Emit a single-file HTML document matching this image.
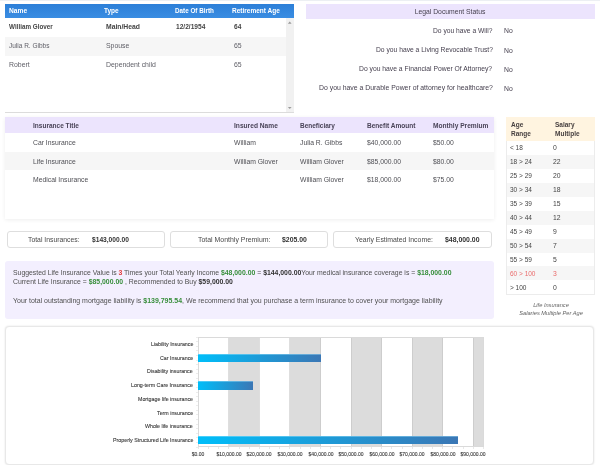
<!DOCTYPE html>
<html><head><meta charset="utf-8">
<style>
*{margin:0;padding:0;box-sizing:border-box}
html,body{width:600px;height:465px;overflow:hidden;background:#fff;font-family:"Liberation Sans",sans-serif;color:#555}
.t{position:absolute;white-space:nowrap;will-change:transform}
.r0{position:absolute}
</style></head><body>
<div class="r0" style="left:0.00px;top:0.00px;width:600.00px;height:1.20px;background:#ecEFF3;"></div>
<div class="r0" style="left:5.00px;top:4.20px;width:289.00px;height:108.30px;background:#fff;"></div>
<div class="r0" style="left:5.00px;top:4.20px;width:289.00px;height:13.60px;background:linear-gradient(#2c7fd8,#3a8de2);"></div>
<div class="r0" style="left:5.00px;top:36.70px;width:281.50px;height:18.90px;background:#f6f6f6;"></div>
<div class="r0" style="left:286.00px;top:17.80px;width:8.00px;height:94.50px;background:#f1f1f1;"></div>
<div class="r0" style="left:5.00px;top:112.00px;width:289.00px;height:1.00px;background:#dcdcdc;"></div>
<svg class="r0" style="left:286px;top:20px" width="8" height="8"><path d="M1.9 3.8 L3.75 1.6 L5.6 3.8Z" fill="#9a9a9a"/></svg>
<svg class="r0" style="left:286px;top:104px" width="8" height="8"><path d="M1.9 3 L3.75 5 L5.6 3Z" fill="#9a9a9a"/></svg>
<div class="t" style="left:9.00px;top:8.00px;font-size:6.7px;line-height:6.7px;color:#fff;font-weight:700;">Name</div>
<div class="t" style="left:104.20px;top:8.00px;font-size:6.5px;line-height:6.5px;color:#fff;font-weight:700;">Type</div>
<div class="t" style="left:175.00px;top:8.00px;font-size:6.3px;line-height:6.3px;color:#fff;font-weight:700;">Date Of Birth</div>
<div class="t" style="left:232.00px;top:8.00px;font-size:6.5px;line-height:6.5px;color:#fff;font-weight:700;">Retirement Age</div>
<div class="t" style="left:9.20px;top:24.00px;font-size:6.3px;line-height:6.3px;color:#444;font-weight:700;">William Glover</div>
<div class="t" style="left:105.80px;top:24.00px;font-size:6.8px;line-height:6.8px;color:#444;font-weight:700;">Main/Head</div>
<div class="t" style="left:176.40px;top:24.00px;font-size:6.6px;line-height:6.6px;color:#444;font-weight:700;">12/2/1954</div>
<div class="t" style="left:234.00px;top:24.00px;font-size:6.6px;line-height:6.6px;color:#444;font-weight:700;">64</div>
<div class="t" style="left:9.30px;top:43.00px;font-size:6.5px;line-height:6.5px;color:#5e5e66;">Julia R. Gibbs</div>
<div class="t" style="left:105.90px;top:43.00px;font-size:6.9px;line-height:6.9px;color:#5e5e66;">Spouse</div>
<div class="t" style="left:234.00px;top:43.00px;font-size:6.9px;line-height:6.9px;color:#5e5e66;">65</div>
<div class="t" style="left:9.30px;top:62.00px;font-size:6.9px;line-height:6.9px;color:#5e5e66;">Robert</div>
<div class="t" style="left:105.90px;top:62.00px;font-size:6.9px;line-height:6.9px;color:#5e5e66;">Dependent child</div>
<div class="t" style="left:234.00px;top:62.00px;font-size:6.9px;line-height:6.9px;color:#5e5e66;">65</div>
<div class="r0" style="left:306.00px;top:4.00px;width:289.00px;height:15.00px;background:#ece4fd;"></div>
<div class="t" style="left:400.20px;width:100px;text-align:center;top:9.00px;font-size:6.8px;line-height:6.8px;color:#46404f;">Legal Document Status</div>
<div class="t" style="right:107.50px;top:28.00px;font-size:6.69px;line-height:6.69px;color:#46404f;text-align:right;">Do you have a Will?</div>
<div class="t" style="left:504.20px;top:28.00px;font-size:6.8px;line-height:6.8px;color:#46404f;">No</div>
<div class="t" style="right:107.50px;top:47.00px;font-size:6.72px;line-height:6.72px;color:#46404f;text-align:right;">Do you have a Living Revocable Trust?</div>
<div class="t" style="left:504.20px;top:48.00px;font-size:6.8px;line-height:6.8px;color:#46404f;">No</div>
<div class="t" style="right:107.50px;top:66.00px;font-size:6.77px;line-height:6.77px;color:#46404f;text-align:right;">Do you have a Financial Power Of Attorney?</div>
<div class="t" style="left:504.20px;top:67.00px;font-size:6.8px;line-height:6.8px;color:#46404f;">No</div>
<div class="t" style="right:107.50px;top:85.00px;font-size:6.89px;line-height:6.89px;color:#46404f;text-align:right;">Do you have a Durable Power of attorney for healthcare?</div>
<div class="t" style="left:504.20px;top:86.00px;font-size:6.8px;line-height:6.8px;color:#46404f;">No</div>
<div class="r0" style="left:5.00px;top:117.30px;width:489.00px;height:101.40px;background:#fff;box-shadow:0 1px 4px rgba(0,0,0,0.07);"></div>
<div class="r0" style="left:5.00px;top:117.30px;width:489.00px;height:15.70px;background:#ece4fd;"></div>
<div class="r0" style="left:5.00px;top:151.90px;width:489.00px;height:18.10px;background:#f6f6f6;"></div>
<div class="t" style="left:32.80px;top:123.00px;font-size:6.53px;line-height:6.53px;color:#4a4458;font-weight:700;">Insurance Title</div>
<div class="t" style="left:234.00px;top:123.00px;font-size:6.64px;line-height:6.64px;color:#4a4458;font-weight:700;">Insured Name</div>
<div class="t" style="left:299.80px;top:123.00px;font-size:6.49px;line-height:6.49px;color:#4a4458;font-weight:700;">Beneficiary</div>
<div class="t" style="left:366.50px;top:123.00px;font-size:6.55px;line-height:6.55px;color:#4a4458;font-weight:700;">Benefit Amount</div>
<div class="t" style="left:432.80px;top:123.00px;font-size:6.61px;line-height:6.61px;color:#4a4458;font-weight:700;">Monthly Premium</div>
<div class="t" style="left:32.80px;top:140.00px;font-size:6.8px;line-height:6.8px;color:#4f4f55;">Car Insurance</div>
<div class="t" style="left:234.00px;top:140.00px;font-size:6.8px;line-height:6.8px;color:#4f4f55;">William</div>
<div class="t" style="left:299.80px;top:140.00px;font-size:6.8px;line-height:6.8px;color:#4f4f55;">Julia R. Gibbs</div>
<div class="t" style="left:366.50px;top:140.00px;font-size:6.8px;line-height:6.8px;color:#4f4f55;">$40,000.00</div>
<div class="t" style="left:432.80px;top:140.00px;font-size:6.8px;line-height:6.8px;color:#4f4f55;">$50.00</div>
<div class="t" style="left:32.80px;top:159.00px;font-size:6.8px;line-height:6.8px;color:#4f4f55;">Life Insurance</div>
<div class="t" style="left:234.00px;top:159.00px;font-size:6.8px;line-height:6.8px;color:#4f4f55;">William Glover</div>
<div class="t" style="left:299.80px;top:159.00px;font-size:6.8px;line-height:6.8px;color:#4f4f55;">William Glover</div>
<div class="t" style="left:366.50px;top:159.00px;font-size:6.8px;line-height:6.8px;color:#4f4f55;">$85,000.00</div>
<div class="t" style="left:432.80px;top:159.00px;font-size:6.8px;line-height:6.8px;color:#4f4f55;">$80.00</div>
<div class="t" style="left:32.80px;top:177.00px;font-size:6.8px;line-height:6.8px;color:#4f4f55;">Medical Insurance</div>
<div class="t" style="left:299.80px;top:177.00px;font-size:6.8px;line-height:6.8px;color:#4f4f55;">William Glover</div>
<div class="t" style="left:366.50px;top:177.00px;font-size:6.8px;line-height:6.8px;color:#4f4f55;">$18,000.00</div>
<div class="t" style="left:432.80px;top:177.00px;font-size:6.8px;line-height:6.8px;color:#4f4f55;">$75.00</div>
<div class="r0" style="left:506.30px;top:117.30px;width:88.30px;height:177.60px;background:#fff;border:1px solid #ececec;border-top:none;"></div>
<div class="r0" style="left:506.30px;top:117.30px;width:88.30px;height:23.70px;background:#fff4e0;"></div>
<div class="r0" style="left:507.30px;top:154.94px;width:86.30px;height:13.94px;background:#f6f6f6;"></div>
<div class="r0" style="left:507.30px;top:182.82px;width:86.30px;height:13.94px;background:#f6f6f6;"></div>
<div class="r0" style="left:507.30px;top:210.70px;width:86.30px;height:13.94px;background:#f6f6f6;"></div>
<div class="r0" style="left:507.30px;top:238.58px;width:86.30px;height:13.94px;background:#f6f6f6;"></div>
<div class="r0" style="left:507.30px;top:266.46px;width:86.30px;height:13.94px;background:#f6f6f6;"></div>
<div class="t" style="left:511.40px;top:122.00px;font-size:6.5px;line-height:6.5px;color:#463f3f;font-weight:700;">Age</div>
<div class="t" style="left:511.40px;top:131.00px;font-size:6.5px;line-height:6.5px;color:#463f3f;font-weight:700;">Range</div>
<div class="t" style="left:555.20px;top:122.00px;font-size:6.5px;line-height:6.5px;color:#463f3f;font-weight:700;">Salary</div>
<div class="t" style="left:555.20px;top:131.00px;font-size:6.5px;line-height:6.5px;color:#463f3f;font-weight:700;">Multiple</div>
<div class="t" style="left:509.50px;top:145.00px;font-size:6.5px;line-height:6.5px;color:#444;">&lt; 18</div>
<div class="t" style="left:552.90px;top:145.00px;font-size:6.8px;line-height:6.8px;color:#444;">0</div>
<div class="t" style="left:509.50px;top:159.00px;font-size:6.5px;line-height:6.5px;color:#444;">18 &gt; 24</div>
<div class="t" style="left:552.90px;top:159.00px;font-size:6.8px;line-height:6.8px;color:#444;">22</div>
<div class="t" style="left:509.50px;top:173.00px;font-size:6.5px;line-height:6.5px;color:#444;">25 &gt; 29</div>
<div class="t" style="left:552.90px;top:173.00px;font-size:6.8px;line-height:6.8px;color:#444;">20</div>
<div class="t" style="left:509.50px;top:187.00px;font-size:6.5px;line-height:6.5px;color:#444;">30 &gt; 34</div>
<div class="t" style="left:552.90px;top:187.00px;font-size:6.8px;line-height:6.8px;color:#444;">18</div>
<div class="t" style="left:509.50px;top:201.00px;font-size:6.5px;line-height:6.5px;color:#444;">35 &gt; 39</div>
<div class="t" style="left:552.90px;top:201.00px;font-size:6.8px;line-height:6.8px;color:#444;">15</div>
<div class="t" style="left:509.50px;top:215.00px;font-size:6.5px;line-height:6.5px;color:#444;">40 &gt; 44</div>
<div class="t" style="left:552.90px;top:215.00px;font-size:6.8px;line-height:6.8px;color:#444;">12</div>
<div class="t" style="left:509.50px;top:229.00px;font-size:6.5px;line-height:6.5px;color:#444;">45 &gt; 49</div>
<div class="t" style="left:552.90px;top:229.00px;font-size:6.8px;line-height:6.8px;color:#444;">9</div>
<div class="t" style="left:509.50px;top:243.00px;font-size:6.5px;line-height:6.5px;color:#444;">50 &gt; 54</div>
<div class="t" style="left:552.90px;top:243.00px;font-size:6.8px;line-height:6.8px;color:#444;">7</div>
<div class="t" style="left:509.50px;top:257.00px;font-size:6.5px;line-height:6.5px;color:#444;">55 &gt; 59</div>
<div class="t" style="left:552.90px;top:257.00px;font-size:6.8px;line-height:6.8px;color:#444;">5</div>
<div class="t" style="left:509.50px;top:271.00px;font-size:6.5px;line-height:6.5px;color:#ea6c6c;">60 &gt; 100</div>
<div class="t" style="left:552.90px;top:271.00px;font-size:6.8px;line-height:6.8px;color:#ea6c6c;">3</div>
<div class="t" style="left:509.50px;top:285.00px;font-size:6.5px;line-height:6.5px;color:#444;">&gt; 100</div>
<div class="t" style="left:552.90px;top:285.00px;font-size:6.8px;line-height:6.8px;color:#444;">0</div>
<div class="t" style="left:500.75px;width:100px;text-align:center;top:303.00px;font-size:5.7px;line-height:5.7px;color:#626262;font-style:italic;">Life Insurance</div>
<div class="t" style="left:500.75px;width:100px;text-align:center;top:311.00px;font-size:5.7px;line-height:5.7px;color:#626262;font-style:italic;">Salaries Multiple Per Age</div>
<div class="r0" style="left:7.00px;top:231.00px;width:158.00px;height:17.00px;background:#fff;border:1px solid #dedede;border-radius:3px;"></div>
<div class="t" style="left:28.40px;top:237.00px;font-size:6.83px;line-height:6.83px;color:#4a4a4a;">Total Insurances:</div>
<div class="t" style="left:92.00px;top:237.00px;font-size:6.65px;line-height:6.65px;color:#333;font-weight:700;">$143,000.00</div>
<div class="r0" style="left:170.00px;top:231.00px;width:158.00px;height:17.00px;background:#fff;border:1px solid #dedede;border-radius:3px;"></div>
<div class="t" style="left:197.50px;top:237.00px;font-size:6.94px;line-height:6.94px;color:#4a4a4a;">Total Monthly Premium:</div>
<div class="t" style="left:282.20px;top:237.00px;font-size:6.89px;line-height:6.89px;color:#333;font-weight:700;">$205.00</div>
<div class="r0" style="left:333.00px;top:231.00px;width:159.00px;height:17.00px;background:#fff;border:1px solid #dedede;border-radius:3px;"></div>
<div class="t" style="left:355.40px;top:237.00px;font-size:6.9px;line-height:6.9px;color:#4a4a4a;">Yearly Estimated Income:</div>
<div class="t" style="left:445.00px;top:237.00px;font-size:6.9px;line-height:6.9px;color:#333;font-weight:700;">$48,000.00</div>
<div class="r0" style="left:5.00px;top:260.50px;width:489.00px;height:58.00px;background:#f3effe;border-radius:3px;"></div>
<div class="t" style="left:12.50px;top:270.00px;font-size:6.86px;line-height:6.86px;color:#4f4f4f;">Suggested Life Insurance Value is <span style="color:#e23a3a;font-weight:700">3</span> Times your Total Yearly Income <span style="color:#388e3c;font-weight:700">$48,000.00</span> = <b style="color:#333">$144,000.00</b>Your medical insurance coverage is = <span style="color:#388e3c;font-weight:700">$18,000.00</span></div>
<div class="t" style="left:12.50px;top:279.00px;font-size:6.86px;line-height:6.86px;color:#4f4f4f;">Current Life Insurance = <span style="color:#388e3c;font-weight:700">$85,000.00</span> , Recommended to Buy <b style="color:#333">$59,000.00</b></div>
<div class="t" style="left:12.50px;top:297.00px;font-size:6.98px;line-height:6.98px;color:#4f4f4f;">Your total outstanding mortgage liability is <span style="color:#388e3c;font-weight:700">$139,795.54</span>, We recommend that you purchase a term insurance to cover your mortgage liability</div>
<div class="r0" style="left:5.00px;top:326.20px;width:588.80px;height:138.60px;background:#fff;border:1px solid #e8e8e8;border-radius:4px;box-shadow:0 0 2px rgba(0,0,0,0.12);"></div>
<div class="r0" style="left:228.86px;top:337.20px;width:30.56px;height:109.80px;background:#dcdcdc;"></div>
<div class="r0" style="left:289.98px;top:337.20px;width:30.56px;height:109.80px;background:#dcdcdc;"></div>
<div class="r0" style="left:351.10px;top:337.20px;width:30.56px;height:109.80px;background:#dcdcdc;"></div>
<div class="r0" style="left:412.22px;top:337.20px;width:30.56px;height:109.80px;background:#dcdcdc;"></div>
<div class="r0" style="left:473.34px;top:337.20px;width:10.86px;height:109.80px;background:#dcdcdc;"></div>
<div class="r0" style="left:228.36px;top:337.20px;width:1.00px;height:109.80px;background:rgba(190,190,190,0.5);"></div>
<div class="r0" style="left:258.92px;top:337.20px;width:1.00px;height:109.80px;background:rgba(190,190,190,0.5);"></div>
<div class="r0" style="left:289.48px;top:337.20px;width:1.00px;height:109.80px;background:rgba(190,190,190,0.5);"></div>
<div class="r0" style="left:320.04px;top:337.20px;width:1.00px;height:109.80px;background:rgba(190,190,190,0.5);"></div>
<div class="r0" style="left:350.60px;top:337.20px;width:1.00px;height:109.80px;background:rgba(190,190,190,0.5);"></div>
<div class="r0" style="left:381.16px;top:337.20px;width:1.00px;height:109.80px;background:rgba(190,190,190,0.5);"></div>
<div class="r0" style="left:411.72px;top:337.20px;width:1.00px;height:109.80px;background:rgba(190,190,190,0.5);"></div>
<div class="r0" style="left:442.28px;top:337.20px;width:1.00px;height:109.80px;background:rgba(190,190,190,0.5);"></div>
<div class="r0" style="left:472.84px;top:337.20px;width:1.00px;height:109.80px;background:rgba(190,190,190,0.5);"></div>
<div class="r0" style="left:197.80px;top:336.70px;width:286.40px;height:110.30px;background:transparent;border:1px solid #dadada;"></div>
<div class="r0" style="left:195.80px;top:336.70px;width:2.00px;height:1.00px;background:#ececec;"></div>
<div class="r0" style="left:195.80px;top:341.27px;width:2.00px;height:1.00px;background:#ececec;"></div>
<div class="r0" style="left:195.80px;top:345.85px;width:2.00px;height:1.00px;background:#ececec;"></div>
<div class="r0" style="left:195.80px;top:350.43px;width:2.00px;height:1.00px;background:#ececec;"></div>
<div class="r0" style="left:195.80px;top:355.00px;width:2.00px;height:1.00px;background:#ececec;"></div>
<div class="r0" style="left:195.80px;top:359.57px;width:2.00px;height:1.00px;background:#ececec;"></div>
<div class="r0" style="left:195.80px;top:364.15px;width:2.00px;height:1.00px;background:#ececec;"></div>
<div class="r0" style="left:195.80px;top:368.73px;width:2.00px;height:1.00px;background:#ececec;"></div>
<div class="r0" style="left:195.80px;top:373.30px;width:2.00px;height:1.00px;background:#ececec;"></div>
<div class="r0" style="left:195.80px;top:377.88px;width:2.00px;height:1.00px;background:#ececec;"></div>
<div class="r0" style="left:195.80px;top:382.45px;width:2.00px;height:1.00px;background:#ececec;"></div>
<div class="r0" style="left:195.80px;top:387.02px;width:2.00px;height:1.00px;background:#ececec;"></div>
<div class="r0" style="left:195.80px;top:391.60px;width:2.00px;height:1.00px;background:#ececec;"></div>
<div class="r0" style="left:195.80px;top:396.18px;width:2.00px;height:1.00px;background:#ececec;"></div>
<div class="r0" style="left:195.80px;top:400.75px;width:2.00px;height:1.00px;background:#ececec;"></div>
<div class="r0" style="left:195.80px;top:405.32px;width:2.00px;height:1.00px;background:#ececec;"></div>
<div class="r0" style="left:195.80px;top:409.90px;width:2.00px;height:1.00px;background:#ececec;"></div>
<div class="r0" style="left:195.80px;top:414.48px;width:2.00px;height:1.00px;background:#ececec;"></div>
<div class="r0" style="left:195.80px;top:419.05px;width:2.00px;height:1.00px;background:#ececec;"></div>
<div class="r0" style="left:195.80px;top:423.62px;width:2.00px;height:1.00px;background:#ececec;"></div>
<div class="r0" style="left:195.80px;top:428.20px;width:2.00px;height:1.00px;background:#ececec;"></div>
<div class="r0" style="left:195.80px;top:432.77px;width:2.00px;height:1.00px;background:#ececec;"></div>
<div class="r0" style="left:195.80px;top:437.35px;width:2.00px;height:1.00px;background:#ececec;"></div>
<div class="r0" style="left:195.80px;top:441.93px;width:2.00px;height:1.00px;background:#ececec;"></div>
<div class="r0" style="left:195.80px;top:446.50px;width:2.00px;height:1.00px;background:#ececec;"></div>
<div class="r0" style="left:197.80px;top:447.00px;width:1.00px;height:2.00px;background:#e8e8e8;"></div>
<div class="r0" style="left:207.99px;top:447.00px;width:1.00px;height:2.00px;background:#e8e8e8;"></div>
<div class="r0" style="left:218.17px;top:447.00px;width:1.00px;height:2.00px;background:#e8e8e8;"></div>
<div class="r0" style="left:228.36px;top:447.00px;width:1.00px;height:2.00px;background:#e8e8e8;"></div>
<div class="r0" style="left:238.55px;top:447.00px;width:1.00px;height:2.00px;background:#e8e8e8;"></div>
<div class="r0" style="left:248.73px;top:447.00px;width:1.00px;height:2.00px;background:#e8e8e8;"></div>
<div class="r0" style="left:258.92px;top:447.00px;width:1.00px;height:2.00px;background:#e8e8e8;"></div>
<div class="r0" style="left:269.11px;top:447.00px;width:1.00px;height:2.00px;background:#e8e8e8;"></div>
<div class="r0" style="left:279.29px;top:447.00px;width:1.00px;height:2.00px;background:#e8e8e8;"></div>
<div class="r0" style="left:289.48px;top:447.00px;width:1.00px;height:2.00px;background:#e8e8e8;"></div>
<div class="r0" style="left:299.67px;top:447.00px;width:1.00px;height:2.00px;background:#e8e8e8;"></div>
<div class="r0" style="left:309.85px;top:447.00px;width:1.00px;height:2.00px;background:#e8e8e8;"></div>
<div class="r0" style="left:320.04px;top:447.00px;width:1.00px;height:2.00px;background:#e8e8e8;"></div>
<div class="r0" style="left:330.23px;top:447.00px;width:1.00px;height:2.00px;background:#e8e8e8;"></div>
<div class="r0" style="left:340.41px;top:447.00px;width:1.00px;height:2.00px;background:#e8e8e8;"></div>
<div class="r0" style="left:350.60px;top:447.00px;width:1.00px;height:2.00px;background:#e8e8e8;"></div>
<div class="r0" style="left:360.79px;top:447.00px;width:1.00px;height:2.00px;background:#e8e8e8;"></div>
<div class="r0" style="left:370.97px;top:447.00px;width:1.00px;height:2.00px;background:#e8e8e8;"></div>
<div class="r0" style="left:381.16px;top:447.00px;width:1.00px;height:2.00px;background:#e8e8e8;"></div>
<div class="r0" style="left:391.35px;top:447.00px;width:1.00px;height:2.00px;background:#e8e8e8;"></div>
<div class="r0" style="left:401.53px;top:447.00px;width:1.00px;height:2.00px;background:#e8e8e8;"></div>
<div class="r0" style="left:411.72px;top:447.00px;width:1.00px;height:2.00px;background:#e8e8e8;"></div>
<div class="r0" style="left:421.91px;top:447.00px;width:1.00px;height:2.00px;background:#e8e8e8;"></div>
<div class="r0" style="left:432.09px;top:447.00px;width:1.00px;height:2.00px;background:#e8e8e8;"></div>
<div class="r0" style="left:442.28px;top:447.00px;width:1.00px;height:2.00px;background:#e8e8e8;"></div>
<div class="r0" style="left:452.47px;top:447.00px;width:1.00px;height:2.00px;background:#e8e8e8;"></div>
<div class="r0" style="left:462.65px;top:447.00px;width:1.00px;height:2.00px;background:#e8e8e8;"></div>
<div class="r0" style="left:472.84px;top:447.00px;width:1.00px;height:2.00px;background:#e8e8e8;"></div>
<div class="r0" style="left:483.03px;top:447.00px;width:1.00px;height:2.00px;background:#e8e8e8;"></div>
<div class="t" style="right:407.00px;top:342.00px;font-size:5.3px;line-height:5.3px;color:#383838;text-align:right;-webkit-text-stroke:0.1px #383838;">Liability Insurance</div>
<div class="t" style="right:407.00px;top:356.00px;font-size:5.3px;line-height:5.3px;color:#383838;text-align:right;-webkit-text-stroke:0.1px #383838;">Car Insurance</div>
<div class="r0" style="left:198.30px;top:353.54px;width:122.24px;height:8.60px;background:linear-gradient(to right,#00bef9,#3b77b5);box-shadow:inset 0 0.6px 0 rgba(180,235,255,0.8);"></div>
<div class="t" style="right:407.00px;top:369.00px;font-size:5.3px;line-height:5.3px;color:#383838;text-align:right;-webkit-text-stroke:0.1px #383838;">Disability insurance</div>
<div class="t" style="right:407.00px;top:383.00px;font-size:5.3px;line-height:5.3px;color:#383838;text-align:right;-webkit-text-stroke:0.1px #383838;">Long-term Care Insurance</div>
<div class="r0" style="left:198.30px;top:380.99px;width:55.01px;height:8.60px;background:linear-gradient(to right,#00bef9,#3b77b5);box-shadow:inset 0 0.6px 0 rgba(180,235,255,0.8);"></div>
<div class="t" style="right:407.00px;top:397.00px;font-size:5.3px;line-height:5.3px;color:#383838;text-align:right;-webkit-text-stroke:0.1px #383838;">Mortgage life insurance</div>
<div class="t" style="right:407.00px;top:411.00px;font-size:5.3px;line-height:5.3px;color:#383838;text-align:right;-webkit-text-stroke:0.1px #383838;">Term insurance</div>
<div class="t" style="right:407.00px;top:424.00px;font-size:5.3px;line-height:5.3px;color:#383838;text-align:right;-webkit-text-stroke:0.1px #383838;">Whole life insurance</div>
<div class="t" style="right:407.00px;top:438.00px;font-size:5.3px;line-height:5.3px;color:#383838;text-align:right;-webkit-text-stroke:0.1px #383838;">Properly Structured Life Insurance</div>
<div class="r0" style="left:198.30px;top:435.89px;width:259.76px;height:8.60px;background:linear-gradient(to right,#00bef9,#3b77b5);box-shadow:inset 0 0.6px 0 rgba(180,235,255,0.8);"></div>
<div class="t" style="left:148.30px;width:100px;text-align:center;top:452.00px;font-size:5.0px;line-height:5.0px;color:#383838;-webkit-text-stroke:0.1px #383838;">$0.00</div>
<div class="t" style="left:178.86px;width:100px;text-align:center;top:452.00px;font-size:5.0px;line-height:5.0px;color:#383838;-webkit-text-stroke:0.1px #383838;">$10,000.00</div>
<div class="t" style="left:209.42px;width:100px;text-align:center;top:452.00px;font-size:5.0px;line-height:5.0px;color:#383838;-webkit-text-stroke:0.1px #383838;">$20,000.00</div>
<div class="t" style="left:239.98px;width:100px;text-align:center;top:452.00px;font-size:5.0px;line-height:5.0px;color:#383838;-webkit-text-stroke:0.1px #383838;">$30,000.00</div>
<div class="t" style="left:270.54px;width:100px;text-align:center;top:452.00px;font-size:5.0px;line-height:5.0px;color:#383838;-webkit-text-stroke:0.1px #383838;">$40,000.00</div>
<div class="t" style="left:301.10px;width:100px;text-align:center;top:452.00px;font-size:5.0px;line-height:5.0px;color:#383838;-webkit-text-stroke:0.1px #383838;">$50,000.00</div>
<div class="t" style="left:331.66px;width:100px;text-align:center;top:452.00px;font-size:5.0px;line-height:5.0px;color:#383838;-webkit-text-stroke:0.1px #383838;">$60,000.00</div>
<div class="t" style="left:362.22px;width:100px;text-align:center;top:452.00px;font-size:5.0px;line-height:5.0px;color:#383838;-webkit-text-stroke:0.1px #383838;">$70,000.00</div>
<div class="t" style="left:392.78px;width:100px;text-align:center;top:452.00px;font-size:5.0px;line-height:5.0px;color:#383838;-webkit-text-stroke:0.1px #383838;">$80,000.00</div>
<div class="t" style="left:423.34px;width:100px;text-align:center;top:452.00px;font-size:5.0px;line-height:5.0px;color:#383838;-webkit-text-stroke:0.1px #383838;">$90,000.00</div>
</body></html>
